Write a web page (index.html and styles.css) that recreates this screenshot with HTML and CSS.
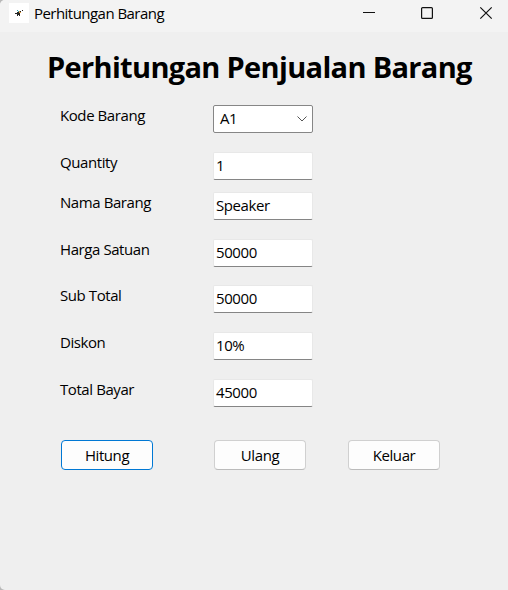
FILE: index.html
```html
<!DOCTYPE html>
<html lang="id">
<head>
<meta charset="utf-8">
<title>Perhitungan Barang</title>
<link rel="stylesheet" href="styles.css">
</head>
<body>
<div class="window">
  <header class="titlebar">
    <svg class="app-icon" width="20" height="20" viewBox="0 0 20 20" shape-rendering="crispEdges">
      <path fill="#fff" d="M0 0h20v20H0z"/>
      <path fill="#222" d="M6 10h2v1H6zM8 9h2v1H8zM8 10h3v2H8zM10 12h1v1h-1zM13 7h1v1h-1zM11 8h1v1h-1zM8 12h1v1H8z"/>
      <path fill="#2aa0b4" d="M8 7h1v1H8zM9 8h1v1H9z"/>
      <path fill="#df963c" d="M10 8h1v1h-1zM10 9h2v1h-2z"/>
    </svg>
    <span class="caption">Perhitungan Barang</span>
    <svg class="controls" width="130" height="14" viewBox="0 0 130 14" fill="none" stroke="#111">
      <path d="M0 6.500h12" shape-rendering="crispEdges"/>
      <rect x="58.600" y="1.600" width="10.800" height="10.800" rx="1" stroke-width="1.200"/>
      <path d="M117.300 1.300l11.400 11.400M128.700 1.300l-11.400 11.400" stroke-width="1.200"/>
    </svg>
  </header>
  <main class="content">
    <h1>Perhitungan Penjualan Barang</h1>
    <div class="fields">
      <div class="row"><span class="label">Kode Barang</span>
        <div class="combo"><span>A1</span><svg width="10" height="6" viewBox="0 0 10 6" fill="none" stroke="#555"><path d="M.5.5L5 5 9.500.500"/></svg></div></div>
      <div class="row"><span class="label">Quantity</span><div class="box">1</div></div>
      <div class="row"><span class="label">Nama Barang</span><div class="box">Speaker</div></div>
      <div class="row"><span class="label">Harga Satuan</span><div class="box">50000</div></div>
      <div class="row"><span class="label">Sub Total</span><div class="box">50000</div></div>
      <div class="row"><span class="label">Diskon</span><div class="box">10%</div></div>
      <div class="row"><span class="label">Total Bayar</span><div class="box">45000</div></div>
    </div>
    <div class="actions">
      <button class="primary">Hitung</button>
      <button>Ulang</button>
      <button>Keluar</button>
    </div>
  </main>
</div>
</body>
</html>
```
FILE: styles.css
```css
* { box-sizing: border-box; }
body {
  margin: 0;
  background: #b8b8b8;
  font: 15px/20px "Open Sans", "Noto Sans", sans-serif;
  letter-spacing: -0.42px;
  color: #000;
}
.window {
  height: 590px;
  overflow: hidden;
  background: #efefef;
  border-radius: 5px 0 0 5px;
}
.titlebar {
  display: flex;
  height: 32px;
  padding: 3px 15px 0 9px;
  background: #f3f3f3;
}
.caption {
  margin: 0 0 0 5px;
  white-space: nowrap;
  letter-spacing: -0.54px;
}
.controls { margin: 3px 0 0 auto; }
h1 {
  margin: 0 0 0 47px;
  padding-top: 15px;
  height: 73px;
  font-size: 29px;
  line-height: 40px;
  font-weight: 700;
  letter-spacing: -0.67px;
  white-space: nowrap;
}
.fields { padding-left: 60px; }
.row {
  display: flex;
  height: 28px;
  margin-bottom: 19px;
}
.row:nth-child(2) { margin-bottom: 12px; }
.row:nth-child(4) { margin-bottom: 18px; }
.label { width: 153px; }
.box {
  width: 100px;
  padding: 2px 0 0 2px;
  background: #fff;
  border: 1px solid #e8e8e8;
  border-bottom-color: #858585;
  border-radius: 2px;
}
.combo {
  display: flex;
  align-items: center;
  justify-content: space-between;
  width: 100px;
  padding: 0 5px 0 6px;
  background: #fff;
  border: 1px solid #868686;
  border-radius: 2px;
}
.combo span { margin-top: -2px; }
.actions {
  display: flex;
  padding: 14px 0 0 61px;
}
button {
  width: 92px;
  height: 30px;
  padding: 0 0 1px;
  background: #fdfdfd;
  border: 1px solid #d0d0d0;
  border-bottom-color: #bbb;
  border-radius: 4px;
  font: inherit;
  letter-spacing: inherit;
  color: inherit;
}
button.primary {
  border-color: #0078d4;
  margin-right: 61px;
}
button + button + button { margin-left: 42px; }
```
